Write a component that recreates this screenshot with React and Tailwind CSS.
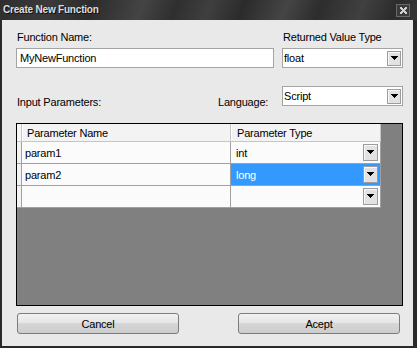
const Arrow = () => (
    <svg width="7" height="5" viewBox="0 0 7 5" shapeRendering="crispEdges">
        <rect x="0" y="0" width="7" height="1" fill="#000" />
        <rect x="1" y="1" width="5" height="1" fill="#000" />
        <rect x="2" y="2" width="3" height="1" fill="#000" />
        <rect x="3" y="3" width="1" height="1" fill="#000" />
    </svg>
)

const DropButton = ({ className = "" }) => (
    <div className={"flex items-center justify-center border border-[#9c9c9c] bg-[#e2e2e2] shadow-[inset_1px_1px_0_#f8f8f8] " + className}>
        <Arrow />
    </div>
)

const Select = ({ value, width }) => (
    <div className={"flex h-[20px] border border-[#a4a4a4] bg-white " + width}>
        <div className="flex-1 pl-[1px] pt-[2px] leading-[14px]">{value}</div>
        <DropButton className="w-[14px] h-[15px] mt-[2px] mr-[1px]" />
    </div>
)

const rows = [
    { name: "param1", type: "int" },
    { name: "param2", type: "long", selected: true },
    { name: "", type: "" },
]

const App = () => {
    return (
        <div className="w-[417px] h-[348px] flex flex-col bg-[#2a2a2a] text-[11px] text-black tracking-[-0.2px] font-['Liberation_Sans',Arial,sans-serif]">
            {/* title bar */}
            <div className="h-[20px] flex items-center bg-[linear-gradient(110deg,#2e2e2e_0%,#3a3a3a_12%,#2c2c2c_22%,#444_34%,#2f2f2f_42%,#3f3f3f_50%,#2b2b2b_58%,#454545_68%,#2d2d2d_76%,#404040_86%,#2c2c2c_94%,#363636_100%)]">
                <span className="pl-[3px] text-[10px] font-bold leading-[20px] text-[#dcdcdc] [text-shadow:1px_1px_0_#111]">Create New Function</span>
                <div className="ml-auto mr-[7px] w-[14px] h-[13px] border border-[#6a6a6a] bg-[#3a3a3a] flex items-center justify-center">
                    <svg width="7" height="7" viewBox="0 0 7 7" shapeRendering="crispEdges">
                        <path d="M0 0h2v1h1v1h1v-1h1v-1h2v2h-1v1h-1v1h1v1h1v2h-2v-1h-1v-1h-1v1h-1v1h-2v-2h1v-1h1v-1h-1v-1h-1z" fill="#cfcfcf" />
                    </svg>
                </div>
            </div>

            {/* body */}
            <div className="h-[326px] ml-[2px] mr-[4px] bg-[#e9e9e9] pl-[14px] pr-[10px] pt-[10px] flex flex-col">
                <div className="flex gap-[8px]">
                    <div className="w-[258px]">
                        <div className="h-[14px] leading-[14px] pl-[1px]">Function Name:</div>
                        <div className="mt-[4px] h-[20px] border border-[#a4a4a4] bg-white pl-[3px] pt-[2px] leading-[14px]">MyNewFunction</div>
                    </div>
                    <div className="w-[121px]">
                        <div className="h-[14px] leading-[14px] pl-[1px]">Returned Value Type</div>
                        <div className="mt-[4px]">
                            <Select value="float" width="w-[121px]" />
                        </div>
                    </div>
                </div>

                <div className="flex mt-[18px] h-[20px]">
                    <div className="w-[202px] pl-[1px] pt-[9px] leading-[14px]">Input Parameters:</div>
                    <div className="flex-1 pt-[9px] leading-[14px]">Language:</div>
                    <Select value="Script" width="w-[121px]" />
                </div>

                {/* parameters grid */}
                <div className="mt-[17px] h-[183px] border border-black bg-[#808080]">
                    <div className="w-[364px] flex flex-col">
                        <div className="flex h-[18px] bg-[#f3f3f3] border-b border-[#c6c6c6]">
                            <div className="w-[5px] border-r border-[#c6c6c6] bg-[#f7f7f7]" />
                            <div className="w-[209px] border-r border-[#c6c6c6] pl-[5px] pt-[2px] leading-[14px] shadow-[inset_1px_0_0_#fff]">Parameter Name</div>
                            <div className="w-[150px] border-r border-[#c6c6c6] pl-[6px] pt-[2px] leading-[14px] shadow-[inset_1px_0_0_#fff]">Parameter Type</div>
                        </div>
                        {rows.map((r, i) => (
                            <div key={i} className="flex h-[22px] bg-[#fbfbfb] border-b border-[#a0a0a0]">
                                <div className="w-[5px] border-r border-[#a0a0a0] bg-[#f3f3f3]" />
                                <div className="w-[209px] border-r border-[#a0a0a0] pl-[3px] flex items-center leading-[14px]">{r.name}</div>
                                <div className={"w-[150px] border-r border-[#a0a0a0] pl-[5px] pr-[2px] flex items-center leading-[14px] " + (r.selected ? "bg-[#3399ff] text-white" : "")}>
                                    <span className="flex-1">{r.type}</span>
                                    <DropButton className="w-[15px] h-[17px]" />
                                </div>
                            </div>
                        ))}
                    </div>
                </div>

                <div className="mt-[7px] flex justify-between">
                    <button className="ml-[1px] w-[162px] h-[21px] rounded-[3px] border border-[#7c7c7c] bg-[linear-gradient(#f2f2f2_0%,#e6e6e6_45%,#d6d6d6_50%,#cdcdcd_100%)] leading-[14px]">Cancel</button>
                    <button className="mr-[3px] w-[162px] h-[21px] rounded-[3px] border border-[#7c7c7c] bg-[linear-gradient(#f2f2f2_0%,#e6e6e6_45%,#d6d6d6_50%,#cdcdcd_100%)] leading-[14px]">Acept</button>
                </div>
            </div>
        </div>
    )
}

export default App
